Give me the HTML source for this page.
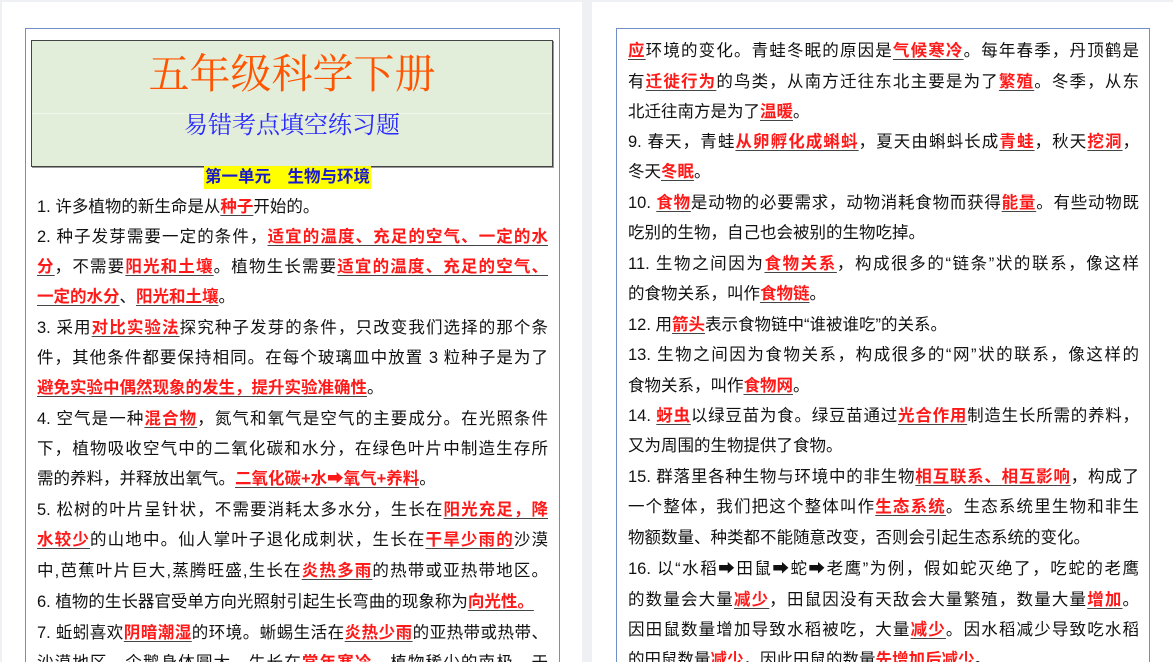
<!DOCTYPE html>
<html><head><meta charset="utf-8">
<style>
html,body{margin:0;padding:0;width:1173px;height:662px;overflow:hidden;}
body{background:#eef0f3;position:relative;font-family:"Liberation Sans","Noto Sans CJK SC",sans-serif;color:#111;}
.page{position:absolute;top:2px;background:#fff;height:660px;}
.box{position:absolute;border:1px solid #6f8fc8;border-bottom:none;height:640px;}
.l{position:absolute;font-size:16.5px;line-height:30px;height:30px;white-space:nowrap;width:511px;}
.j{text-align:justify;text-align-last:justify;}
b{color:#ff1a1a;font-weight:bold;text-decoration:underline;text-decoration-color:#444;text-underline-offset:3px;}
.title{position:absolute;left:31px;top:40px;width:520px;height:125px;background:#e2eed9;border:1px solid #444;box-shadow:1px 1px 0 #999;}
.t1{position:absolute;left:0;right:0;top:5px;text-align:center;font-family:"Noto Serif CJK SC",serif;font-size:41px;color:#ff5500;line-height:50px;}
.t2{position:absolute;left:0;right:0;top:65px;text-align:center;font-family:"Noto Serif CJK SC",serif;font-size:24px;color:#2a2aff;line-height:34px;}
.div{position:absolute;left:0;right:0;top:72px;border-top:1px solid #f2f7ee;}
.h{position:absolute;left:204px;top:166px;background:#ffff00;color:#1a1acc;font-weight:bold;font-size:16.5px;line-height:23px;padding:0 1px;}
</style></head><body>
<div class="page" style="left:2px;width:580px;"></div>
<div class="page" style="left:592px;width:581px;"></div>
<div class="box" style="left:25px;top:28px;width:533px;"></div>
<div class="box" style="left:616px;top:28px;width:532px;"></div>
<div class="title"><div class="t1">五年级科学下册</div><div class="div"></div><div class="t2">易错考点填空练习题</div></div>
<div class="h">第一单元　生物与环境</div>

<div class="l" style="left:37px;top:192px">1. 许多植物的新生命是从<b>种子</b>开始的。</div>
<div class="l j" style="left:37px;top:222px">2. 种子发芽需要一定的条件，<b>适宜的温度、充足的空气、一定的水</b></div>
<div class="l j" style="left:37px;top:252px"><b>分</b>，不需要<b>阳光和土壤</b>。植物生长需要<b>适宜的温度、充足的空气、</b></div>
<div class="l" style="left:37px;top:282px"><b>一定的水分</b>、<b>阳光和土壤</b>。</div>
<div class="l j" style="left:37px;top:313px">3. 采用<b>对比实验法</b>探究种子发芽的条件，只改变我们选择的那个条</div>
<div class="l j" style="left:37px;top:343px">件，其他条件都要保持相同。在每个玻璃皿中放置 3 粒种子是为了</div>
<div class="l" style="left:37px;top:373px"><b>避免实验中偶然现象的发生，提升实验准确性</b>。</div>
<div class="l j" style="left:37px;top:404px">4. 空气是一种<b>混合物</b>，氮气和氧气是空气的主要成分。在光照条件</div>
<div class="l j" style="left:37px;top:434px">下，植物吸收空气中的二氧化碳和水分，在绿色叶片中制造生存所</div>
<div class="l" style="left:37px;top:464px">需的养料，并释放出氧气。<b>二氧化碳+水➡氧气+养料</b>。</div>
<div class="l j" style="left:37px;top:495px">5. 松树的叶片呈针状，不需要消耗太多水分，生长在<b>阳光充足，降</b></div>
<div class="l j" style="left:37px;top:525px"><b>水较少</b>的山地中。仙人掌叶子退化成刺状，生长在<b>干旱少雨的</b>沙漠</div>
<div class="l j" style="left:37px;top:556px">中,芭蕉叶片巨大,蒸腾旺盛,生长在<b>炎热多雨</b>的热带或亚热带地区。</div>
<div class="l" style="left:37px;top:587px">6. 植物的生长器官受单方向光照射引起生长弯曲的现象称为<b>向光性。</b></div>
<div class="l j" style="left:37px;top:618px">7. 蚯蚓喜欢<b>阴暗潮湿</b>的环境。蜥蜴生活在<b>炎热少雨</b>的亚热带或热带、</div>
<div class="l j" style="left:37px;top:648px">沙漠地区，企鹅身体圆大，生长在<b>常年寒冷</b>，植物稀少的南极。于</div>

<div class="l j" style="left:628px;top:36px"><b>应</b>环境的变化。青蛙冬眠的原因是<b>气候寒冷</b>。每年春季，丹顶鹤是</div>
<div class="l j" style="left:628px;top:67px">有<b>迁徙行为</b>的鸟类，从南方迁往东北主要是为了<b>繁殖</b>。冬季，从东</div>
<div class="l" style="left:628px;top:97px">北迁往南方是为了<b>温暖</b>。</div>
<div class="l j" style="left:628px;top:127px">9. 春天，青蛙<b>从卵孵化成蝌蚪</b>，夏天由蝌蚪长成<b>青蛙</b>，秋天<b>挖洞</b>，</div>
<div class="l" style="left:628px;top:157px">冬天<b>冬眠</b>。</div>
<div class="l j" style="left:628px;top:188px">10. <b>食物</b>是动物的必要需求，动物消耗食物而获得<b>能量</b>。有些动物既</div>
<div class="l" style="left:628px;top:218px">吃别的生物，自己也会被别的生物吃掉。</div>
<div class="l j" style="left:628px;top:249px">11. 生物之间因为<b>食物关系</b>，构成很多的“链条”状的联系，像这样</div>
<div class="l" style="left:628px;top:279px">的食物关系，叫作<b>食物链</b>。</div>
<div class="l" style="left:628px;top:310px">12. 用<b>箭头</b>表示食物链中“谁被谁吃”的关系。</div>
<div class="l j" style="left:628px;top:340px">13. 生物之间因为食物关系，构成很多的“网”状的联系，像这样的</div>
<div class="l" style="left:628px;top:371px">食物关系，叫作<b>食物网</b>。</div>
<div class="l j" style="left:628px;top:401px">14. <b>蚜虫</b>以绿豆苗为食。绿豆苗通过<b>光合作用</b>制造生长所需的养料，</div>
<div class="l" style="left:628px;top:431px">又为周围的生物提供了食物。</div>
<div class="l j" style="left:628px;top:462px">15. 群落里各种生物与环境中的非生物<b>相互联系、相互影响</b>，构成了</div>
<div class="l j" style="left:628px;top:492px">一个整体，我们把这个整体叫作<b>生态系统</b>。生态系统里生物和非生</div>
<div class="l" style="left:628px;top:523px">物额数量、种类都不能随意改变，否则会引起生态系统的变化。</div>
<div class="l j" style="left:628px;top:554px">16. 以“水稻➡田鼠➡蛇➡老鹰”为例，假如蛇灭绝了，吃蛇的老鹰</div>
<div class="l j" style="left:628px;top:585px">的数量会大量<b>减少</b>，田鼠因没有天敌会大量繁殖，数量大量<b>增加</b>。</div>
<div class="l j" style="left:628px;top:615px">因田鼠数量增加导致水稻被吃，大量<b>减少</b>。因水稻减少导致吃水稻</div>
<div class="l" style="left:628px;top:645px">的田鼠数量<b>减少</b>，因此田鼠的数量<b>先增加后减少</b>。</div>
</body></html>
